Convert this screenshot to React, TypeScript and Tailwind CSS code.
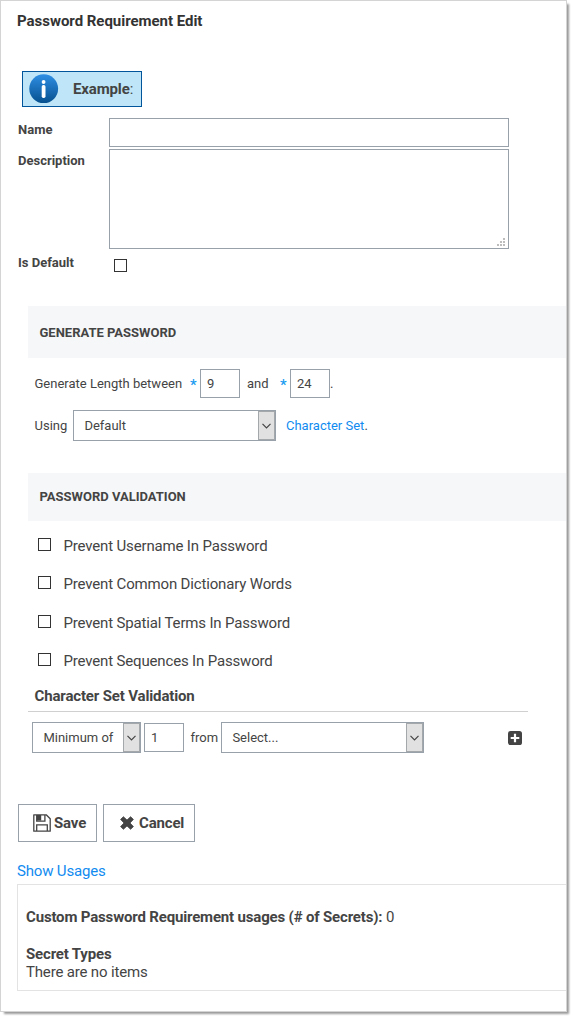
import { ReactNode } from 'react';

function Checkbox({ className = '' }: { className?: string }) {
  return <span role="checkbox" aria-checked="false" className={`block h-[13px] w-[13px] shrink-0 border border-[#333] bg-white ${className}`} />;
}

function Select({ children, className }: { children: ReactNode; className: string }) {
  return (
    <div className={`flex h-[31px] shrink-0 border border-[#98a1aa] bg-white ${className}`}>
      <span className="grow pl-[10.4px] leading-[29px] whitespace-nowrap">{children}</span>
      <span className="flex w-[17px] shrink-0 items-center justify-center border border-[#a5a8ab] bg-[#e1e1e1]">
        <svg width="9" height="6" viewBox="0 0 9 6" fill="none" stroke="#444" strokeWidth="1.2">
          <path d="M.5 .8 4.5 4.8 8.5 .8" />
        </svg>
      </span>
    </div>
  );
}

function NumberBox({ children, className = '' }: { children: ReactNode; className?: string }) {
  return (
    <div className={`h-[29px] w-[40px] shrink-0 border border-[#98a1aa] bg-white pl-[6px] leading-[27px] ${className}`}>{children}</div>
  );
}

function Required() {
  return <span className="h-[16px] w-[10px] text-[15px] leading-[18px] font-medium text-[#1b9cf0]">*</span>;
}

function InfoIcon() {
  return (
    <svg width="30" height="30" viewBox="0 0 30 30" className="shrink-0">
      <defs>
        <linearGradient id="info" x1="0" y1="0" x2="0" y2="1">
          <stop offset="0" stopColor="#2f8fe4" />
          <stop offset="1" stopColor="#06508f" />
        </linearGradient>
      </defs>
      <circle cx="14.7" cy="14.7" r="14.4" fill="url(#info)" />
      <circle cx="14.6" cy="8" r="1.9" fill="#fff" />
      <rect x="12.7" y="11" width="3.8" height="13" rx="1.7" fill="#fff" />
    </svg>
  );
}

function SaveIcon() {
  return (
    <svg width="18" height="18" viewBox="0 0 18 18" fill="none" stroke="#444" strokeWidth="1.3" className="shrink-0">
      <path d="M.8 .8H13.2L17.2 4.8V17.2H.8Z" strokeLinejoin="round" />
      <path d="M3.7 1V7.2H11.9V1M3.7 17V10.8H14.3V17" />
      <path d="M4 1H8.2V6.6H4Z" fill="#444" stroke="none" />
    </svg>
  );
}

function CancelIcon() {
  return (
    <svg width="14" height="14" viewBox="0 0 14 14" fill="#444" className="shrink-0">
      <path d="M3.4.7 7 4.1 10.6.7 13.4 3.4 10 7 13.4 10.6 10.6 13.3 7 9.9 3.4 13.3 .6 10.6 4 7 .6 3.4Z" stroke="#444" strokeWidth=".8" strokeLinejoin="round" />
    </svg>
  );
}

function PlusIcon() {
  return (
    <svg width="14" height="14" viewBox="0 0 14 14" className="shrink-0">
      <rect width="14" height="14" rx="2.6" fill="#444" />
      <path d="M7 2.7V11.3M2.7 7H11.3" stroke="#fff" strokeWidth="2.2" />
    </svg>
  );
}

function ResizeGrip() {
  return (
    <svg width="8" height="8" viewBox="0 0 8 8" fill="#bdbdbd">
      <path d="M6 0h2v2H6zM3 3h2v2H3zM6 3h2v2H6zM0 6h2v2H0zM3 6h2v2H3zM6 6h2v2H6z" />
    </svg>
  );
}

const rules = [
  { label: 'Prevent Username In Password', height: 'h-[38px]' },
  { label: 'Prevent Common Dictionary Words', height: 'h-[39px]' },
  { label: 'Prevent Spatial Terms In Password', height: 'h-[38px]' },
  { label: 'Prevent Sequences In Password', height: 'h-[37px]' },
];

export default function App() {
  return (
    <div className="h-[1020px] w-[575px] overflow-hidden bg-white font-[Roboto,sans-serif] text-[13px] text-[#444]">
      <main className="flex h-[1012px] w-[567px] flex-col border border-[#d4d4d4] bg-white shadow-[3px_3px_2px_-1px_rgba(0,0,0,0.4)]">
        <h1 className="h-[70px] shrink-0 pt-[10px] pl-[16px] text-[15px] leading-[20px] font-bold tracking-[-0.03px] text-[#333]">Password Requirement Edit</h1>

        <div className="ml-[21px] flex h-[36px] w-[120px] shrink-0 items-center border border-[#00559b] bg-[#bee6f8] pl-[6px] text-[15px] tracking-[-0.14px]">
          <InfoIcon />
          <span className="ml-[14px]"><b>Example</b>:</span>
        </div>

        <section className="mt-[11px] ml-[17px] shrink-0">
          <div className="flex h-[31px]">
            <b className="w-[91px] pt-[3px] leading-[18px]">Name</b>
            <div className="h-[29px] w-[400px] border border-[#98a1aa]" />
          </div>
          <div className="flex h-[100px]">
            <b className="w-[91px] pt-[3px] leading-[18px]">Description</b>
            <div className="flex h-[100px] w-[400px] items-end justify-end border border-[#98a1aa] pr-[3px] pb-[2px]">
              <ResizeGrip />
            </div>
          </div>
          <div className="flex h-[57px]">
            <b className="w-[96px] pt-[5px] leading-[18px]">Is Default</b>
            <Checkbox className="mt-[10px]" />
          </div>
        </section>

        <section className="ml-[27px] shrink-0">
          <h2 className="h-[52px] bg-[#f6f7f9] pl-[11.5px] leading-[53px] font-bold">GENERATE PASSWORD</h2>
          <div className="mt-[11px] flex items-center pl-[6.5px]">
            <span className="w-[155.5px]">Generate Length between</span>
            <Required />
            <NumberBox>9</NumberBox>
            <span className="w-[40px] pl-[7px]">and</span>
            <Required />
            <NumberBox>24</NumberBox>
            <span>.</span>
          </div>
          <div className="mt-[12px] flex items-center pl-[6.5px]">
            <span className="w-[38.5px]">Using</span>
            <Select className="w-[203px]">Default</Select>
            <span className="ml-[10px]"><a className="text-[#118bf0]">Character Set</a>.</span>
          </div>
        </section>

        <section className="mt-[32px] ml-[27px] shrink-0">
          <h2 className="h-[48px] bg-[#f6f7f9] pl-[11.5px] leading-[48px] font-bold">PASSWORD VALIDATION</h2>
          <div className="pt-[17px] pl-[10px]">
            {rules.map((rule) => (
              <div key={rule.label} className={`flex text-[15px] leading-[17px] tracking-[-0.16px] ${rule.height}`}>
                <Checkbox />
                <span className="ml-[12.5px]">{rule.label}</span>
              </div>
            ))}
          </div>
          <h3 className="flex h-[22px] w-[500px] border-b border-[#d0d0d0] pl-[6.5px] text-[15px] leading-[13px] font-bold tracking-[-0.15px]">Character Set Validation</h3>
          <div className="mt-[10px] flex w-[500px] items-center pl-[4px]">
            <Select className="w-[109px]">Minimum of</Select>
            <NumberBox className="ml-[3px]">1</NumberBox>
            <span className="w-[37px] pl-[6.5px]">from</span>
            <Select className="w-[203px]">Select...</Select>
            <span className="ml-[84px]"><PlusIcon /></span>
          </div>
        </section>

        <div className="mt-[51px] ml-[17px] flex shrink-0 gap-[6px] text-[15px] font-bold tracking-[-0.17px]">
          <button className="flex h-[38px] w-[79px] items-center border border-[#98a1aa] pl-[14px]">
            <SaveIcon />
            <span className="ml-[3px]">Save</span>
          </button>
          <button className="flex h-[38px] w-[92px] items-center border border-[#98a1aa] pl-[16px]">
            <CancelIcon />
            <span className="ml-[5px]">Cancel</span>
          </button>
        </div>

        <a className="mt-[19px] ml-[16px] block h-[23px] shrink-0 text-[15px] leading-[20px] tracking-[-0.17px] text-[#118bf0]">Show Usages</a>
        <section className="ml-[16px] h-[107px] shrink-0 border-y border-l border-[#e3e3e3] pt-[23px] pl-[8px] text-[15px] leading-[18px] tracking-[-0.17px]">
          <p><b>Custom Password Requirement usages (# of Secrets):</b> 0</p>
          <p className="mt-[19px] font-bold">Secret Types</p>
          <p>There are no items</p>
        </section>
      </main>
    </div>
  );
}
